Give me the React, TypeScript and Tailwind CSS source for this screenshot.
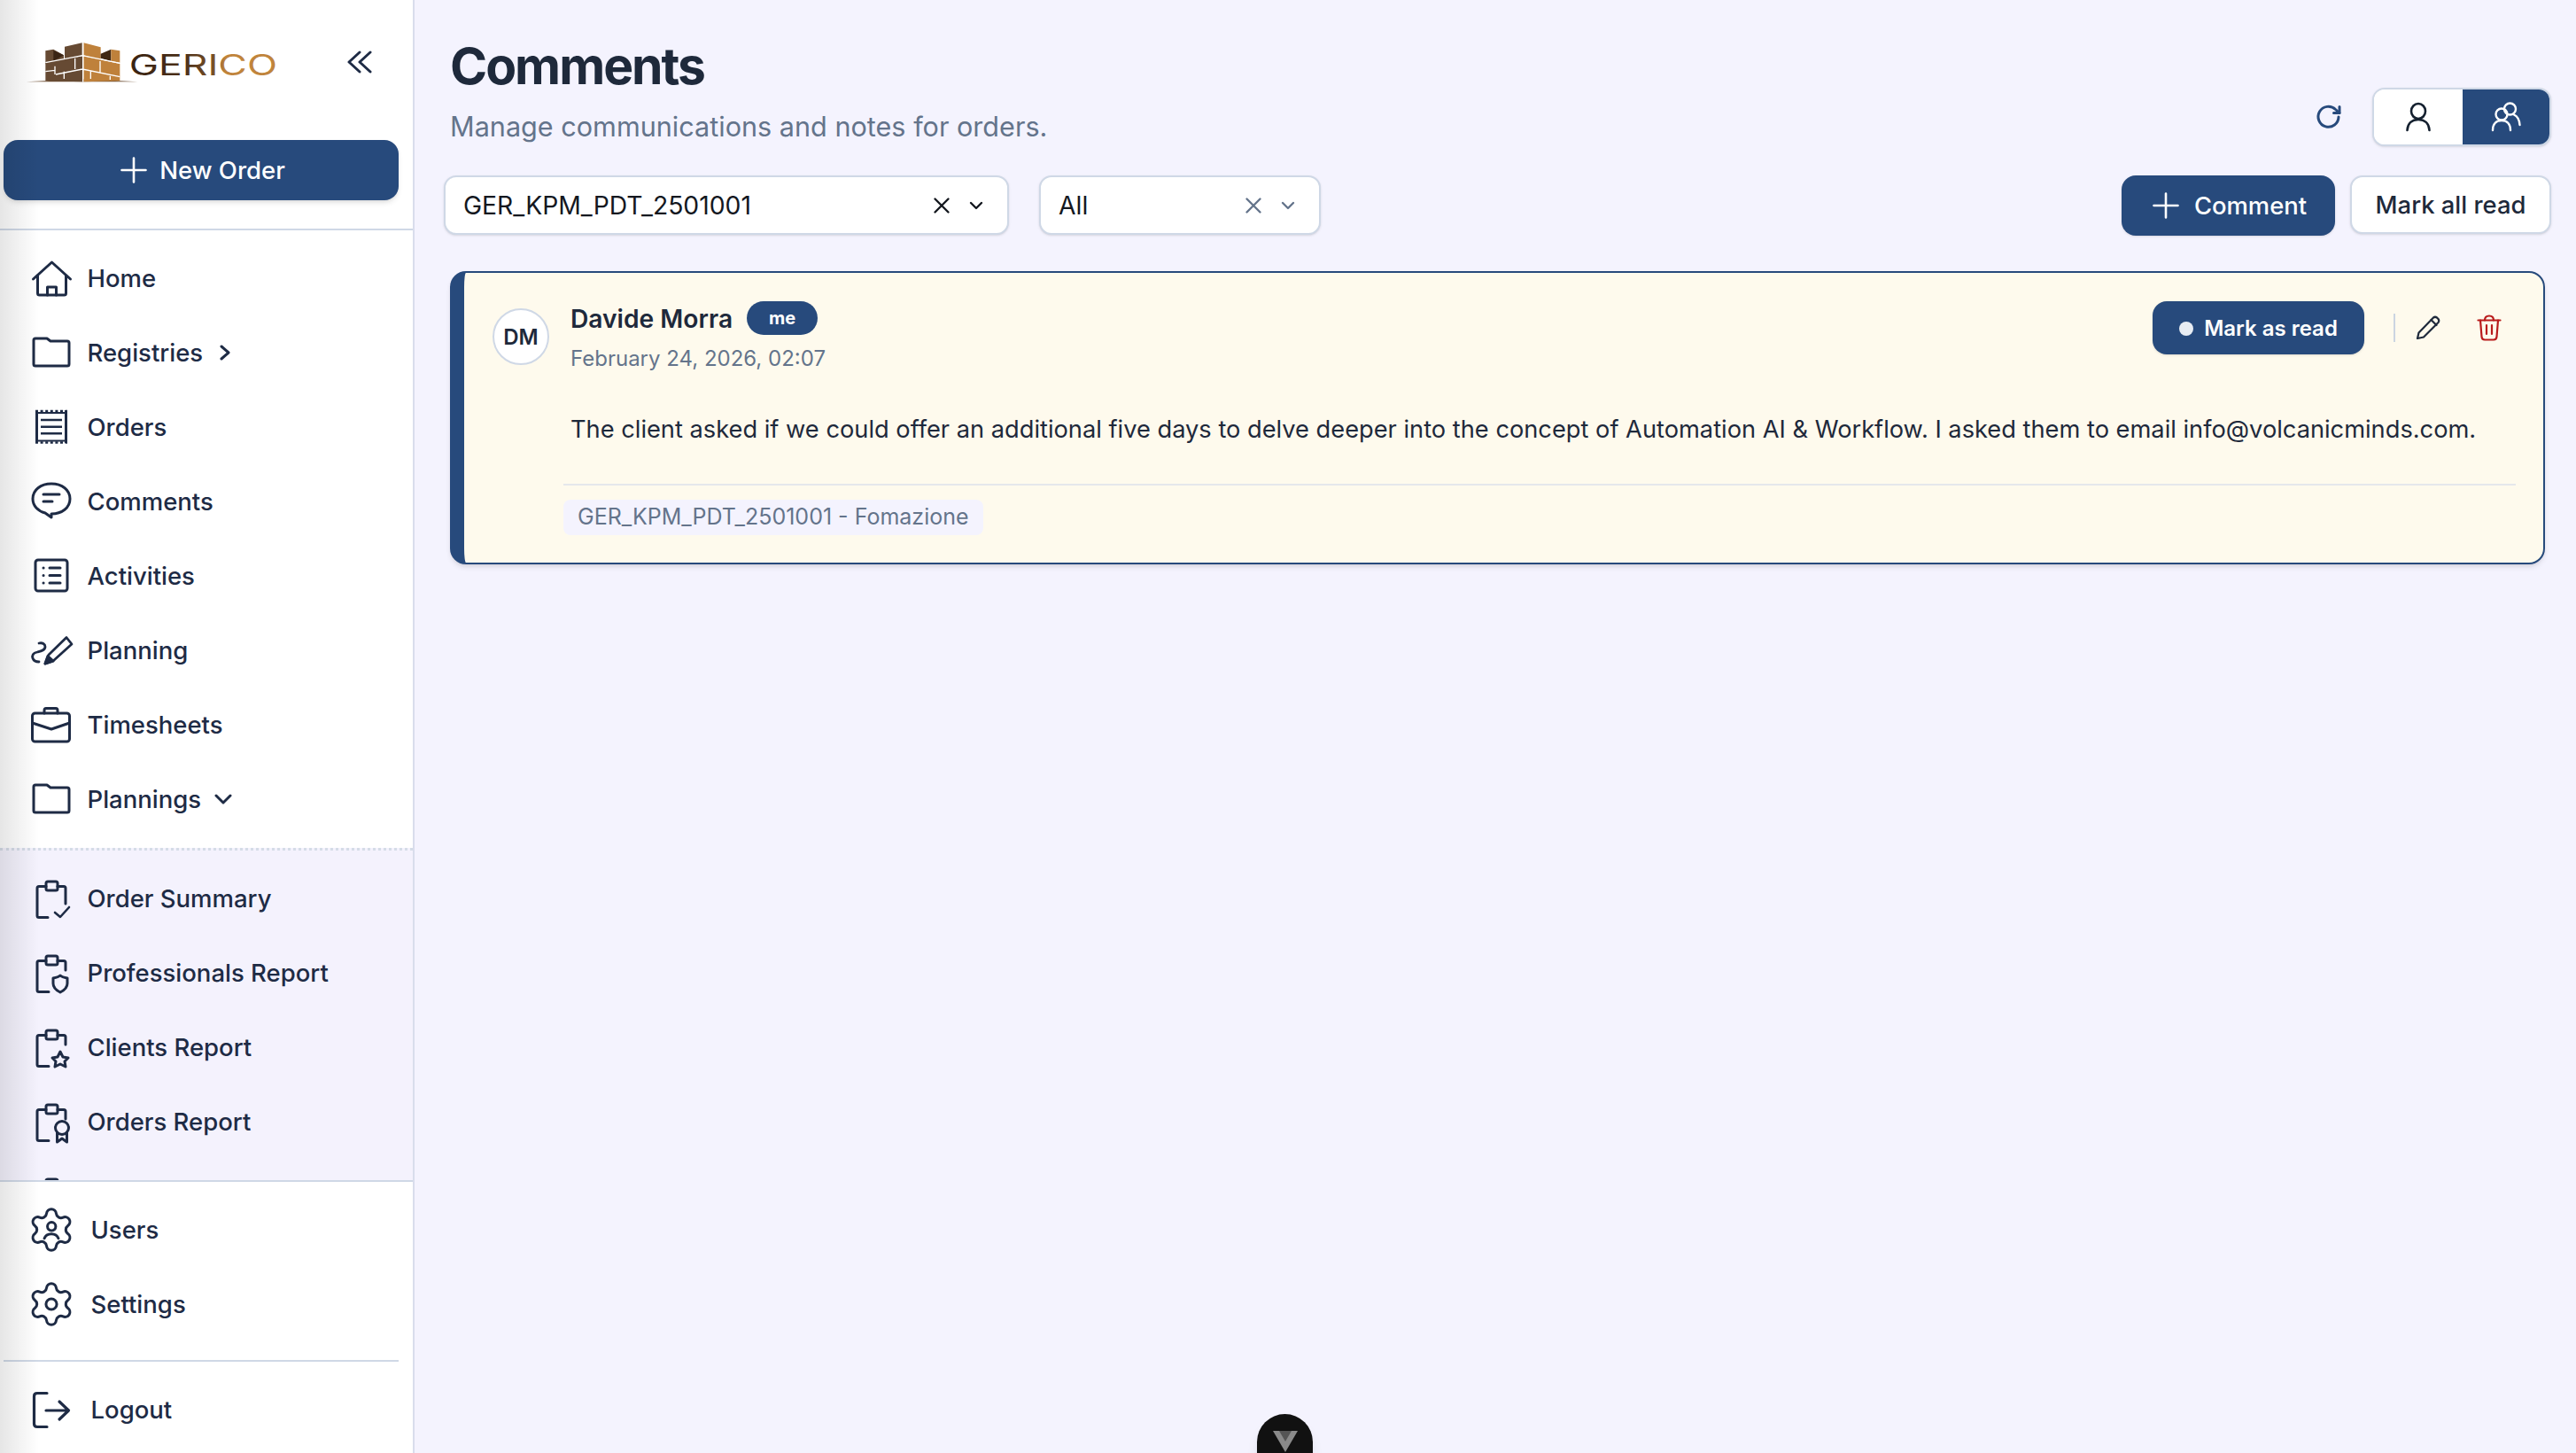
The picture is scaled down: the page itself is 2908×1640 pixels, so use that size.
import React from "react";

const INK = "#1e2b45";

function Box({ children }: { children: React.ReactNode }) {
  return (
    <svg width="56" height="56" viewBox="0 0 56 56" fill="none" stroke={INK} strokeWidth="3" strokeLinecap="round" strokeLinejoin="round" className="shrink-0">
      {children}
    </svg>
  );
}

const HomeIcon = () => (
  <Box>
    <path d="M7.5 29 L28.5 10 L49.5 29" />
    <path d="M12.5 25 V45 Q12.5 47 14.5 47 H42.5 Q44.5 47 44.5 45 V25" />
    <path d="M23.5 47 V38 H33.5 V47" />
  </Box>
);
const FolderIcon = () => (
  <Box>
    <path d="M8 14 Q8 12 10 12 H23 L27 15 H46 Q48 15 48 17 V41 Q48 43 46 43 H10 Q8 43 8 41 Z" />
  </Box>
);
const ReceiptIcon = () => (
  <Box>
    <path d="M11.5 9 V46 M44.5 9 V46" strokeLinecap="butt" />
    <path d="M10 10 H46 M10 45.5 H46" strokeDasharray="3 2.6" strokeWidth="2.6" strokeLinecap="butt" />
    <path d="M11 12 H45 M11 43.5 H45" strokeWidth="2.2" strokeLinecap="butt" />
    <path d="M16 20 H40 M16 27.7 H40 M16 35.3 H40" strokeWidth="2.6" strokeLinecap="butt" />
  </Box>
);
const CommentIcon = () => (
  <Box>
    <path d="M28 8 C16 8 7 15 7 25 C7 33 13 39 21 41 L28 46 V42 C40 42 49 35 49 25 C49 15 40 8 28 8 Z" />
    <path d="M19 20 H37 M19 28 H29" />
  </Box>
);
const ActivitiesIcon = () => (
  <Box>
    <rect x="10" y="10" width="36" height="35" rx="3" />
    <path d="M19 19 H19.1 M19 27.5 H19.1 M19 36 H19.1" />
    <path d="M26 19 H38 M26 27.5 H38 M26 36 H38" />
  </Box>
);
const PlanningIcon = () => (
  <Box>
    <path d="M21 43 L25 33 L45 13.5 L51 21 L30 40 Z" strokeWidth="2.8" />
    <path d="M21 43 L24 34.5 L30 40 Z" fill={INK} />
    <path d="M14 20 C18 19 21 21 21 24 C21 28 16 29 12 30 C7 31 6 34 7 37 C8 40 11 41 14 41" strokeWidth="2.8" />
  </Box>
);
const BriefcaseIcon = () => (
  <Box>
    <rect x="6.5" y="15" width="42" height="32" rx="3" />
    <path d="M20 15 V12 Q20 9.5 22 9.5 H33 Q35 9.5 35 12 V15" />
    <path d="M6.5 26 L28 33 L48.5 26" />
  </Box>
);

function Clip({ children, rightTo = 25, bottomTo = 25 }: { children?: React.ReactNode; rightTo?: number; bottomTo?: number }) {
  return (
    <Box>
      <rect x="22" y="9" width="13" height="10" rx="2" />
      <path d={`M22 14.5 H14 Q12 14.5 12 16.5 V47.5 Q12 49.5 14 49.5 H${bottomTo}`} />
      <path d={`M35 14.5 H42 Q44 14.5 44 16.5 V${rightTo}`} />
      {children}
    </Box>
  );
}
const ClipCheck = () => (
  <Clip rightTo={34} bottomTo={24}>
    <path d="M32 44 L38 49 L48 38" strokeWidth="2.6" />
  </Clip>
);
const ClipShield = () => (
  <Clip>
    <path d="M30 34 Q36 33 38 31 Q40 33 46 34 V40 Q46 46 38 50 Q30 46 30 40 Z" />
  </Clip>
);
const ClipStar = () => (
  <Clip bottomTo={25}>
    <path d="M38 33 L41 39 L47 40 L43 44 L44 50 L38 47 L32 50 L33 44 L29 40 L35 39 Z" />
  </Clip>
);
const ClipRibbon = () => (
  <Clip>
    <circle cx="40" cy="35" r="7.5" />
    <path d="M34.5 40 V51 L40 47 L45.5 51 V40" />
  </Clip>
);

const GEAR =
  "M9.671 4.136a2.34 2.34 0 0 1 4.659 0 2.34 2.34 0 0 0 3.319 1.915 2.34 2.34 0 0 1 2.33 4.033 2.34 2.34 0 0 0 0 3.831 2.34 2.34 0 0 1-2.33 4.033 2.34 2.34 0 0 0-3.319 1.915 2.34 2.34 0 0 1-4.659 0 2.34 2.34 0 0 0-3.32-1.915 2.34 2.34 0 0 1-2.33-4.033 2.34 2.34 0 0 0 0-3.831A2.34 2.34 0 0 1 6.35 6.051a2.34 2.34 0 0 0 3.319-1.915";

const GearIcon = ({ users }: { users?: boolean }) => (
  <svg width="56" height="56" viewBox="0 0 24 24" fill="none" stroke={INK} strokeWidth="1.3" strokeLinecap="round" strokeLinejoin="round" className="shrink-0">
    <path d={GEAR} />
    {users ? (
      <>
        <circle cx="12.1" cy="10.4" r="2" />
        <path d="M8.6 16.2 C9.2 14.5 10.5 14 12 14 C13.5 14 14.8 14.5 15.4 16.2" />
      </>
    ) : (
      <circle cx="12" cy="12" r="2.6" />
    )}
  </svg>
);

const LogoutIcon = () => (
  <Box>
    <path d="M23 9.5 H12 Q8.5 9.5 8.5 13 V44 Q8.5 47.5 12 47.5 H23" strokeWidth="3.2" />
    <path d="M22 29 H47 M37 19 L47.5 29 L37 39" strokeWidth="3.2" />
  </Box>
);

function NavItem({ icon, label, after, gap = "gap-[12.5px]" }: { icon: React.ReactNode; label: string; after?: React.ReactNode; gap?: string }) {
  return (
    <div className={`flex h-[84px] shrink-0 items-center pl-[30px] ${gap} text-[27.5px] font-medium text-[#1e2b45]`}>
      {icon}
      <span className="pt-[1px]">{label}</span>
      {after}
    </div>
  );
}

const Plus = ({ size = 30 }: { size?: number }) => (
  <svg width={size} height={size} viewBox="0 0 30 30" fill="none" stroke="#fff" strokeWidth="2.6" strokeLinecap="round" className="shrink-0">
    <path d="M15 1.5 V28.5 M1.5 15 H28.5" />
  </svg>
);

function Logo() {
  return (
    <svg width="290" height="60" viewBox="80 130 870 180" fill="none" className="shrink-0">
      <defs>
        <linearGradient id="gericoText" x1="440" x2="935" y1="0" y2="0" gradientUnits="userSpaceOnUse">
          <stop offset="0" stopColor="#3a2312" />
          <stop offset="0.36" stopColor="#4a2e17" />
          <stop offset="0.58" stopColor="#7a5229" />
          <stop offset="0.65" stopColor="#c0843c" />
          <stop offset="1" stopColor="#c0843c" />
        </linearGradient>
      </defs>
      <polygon points="88,275 280,266 465,275" fill="#6b4c30" />
      <polygon points="153,170 180,165 215,185 215,205 153,215" fill="#664a33" />
      <polygon points="180,168 215,185 180,205" fill="#3a2414" />
      <polygon points="218,156 277,143 277,185 218,205" fill="#664a33" />
      <polygon points="282,143 340,158 340,203 282,185" fill="#bf813b" />
      <polygon points="340,180 375,165 375,205 340,195" fill="#3f2713" />
      <polygon points="375,165 405,170 405,210 375,205" fill="#bf813b" />
      <polygon points="153,211 278,188 278,275 153,272" fill="#664a33" />
      <polygon points="282,188 405,214 405,272 282,275" fill="#bf813b" />
      <path d="M153 210 L278 186 L405 212 M153 240 L185 236 M185 222 V250 M253 195 V232 M188 250 L278 232 L405 258 M338 205 V245 M280 143 V275 M216 240 V265 M306 240 V265 M372 255 V268" stroke="#fff" strokeWidth="4" />
      <text x="436" y="254" fontFamily="Inter, sans-serif" fontSize="96" fontWeight="400" fill="url(#gericoText)" textLength="502" lengthAdjust="spacingAndGlyphs">
        GERICO
      </text>
    </svg>
  );
}

function Sidebar() {
  return (
    <aside className="relative flex h-[1640px] w-[468px] shrink-0 flex-col border-r-2 border-[#d9ddec] bg-white">
      <div className="flex h-[158px] shrink-0 items-start justify-between pl-[27px] pr-[45px] pt-[44px]">
        <Logo />
        <svg width="30" height="26" viewBox="0 0 30 26" fill="none" stroke={INK} strokeWidth="3" strokeLinecap="round" strokeLinejoin="round" className="mt-[13px] shrink-0">
          <path d="M15 2 L3 13 L15 24 M27 2 L15 13 L27 24" />
        </svg>
      </div>
      <div className="shrink-0 border-b-2 border-[#cfd8e6] px-[4px] pb-[32px]">
        <div className="flex h-[68px] w-[446px] items-center justify-center gap-[14px] rounded-[16px] bg-[#274a7c] pl-[4px] text-[27.5px] font-medium text-white shadow-md">
          <Plus />
          <span className="pt-[1px]">New Order</span>
        </div>
      </div>
      <nav className="shrink-0 pb-[13px] pt-[12px]">
        <NavItem icon={<HomeIcon />} label="Home" />
        <NavItem
          icon={<FolderIcon />}
          label="Registries"
          after={
            <svg width="14" height="20" viewBox="0 0 14 20" fill="none" stroke={INK} strokeWidth="3" strokeLinecap="round" strokeLinejoin="round" className="ml-[5px]">
              <path d="M3 3 L11 10 L3 17" />
            </svg>
          }
        />
        <NavItem icon={<ReceiptIcon />} label="Orders" />
        <NavItem icon={<CommentIcon />} label="Comments" />
        <NavItem icon={<ActivitiesIcon />} label="Activities" />
        <NavItem icon={<PlanningIcon />} label="Planning" />
        <NavItem icon={<BriefcaseIcon />} label="Timesheets" />
        <NavItem
          icon={<FolderIcon />}
          label="Plannings"
          after={
            <svg width="22" height="14" viewBox="0 0 22 14" fill="none" stroke={INK} strokeWidth="3" strokeLinecap="round" strokeLinejoin="round" className="ml-[1px]">
              <path d="M3 3 L11 11 L19 3" />
            </svg>
          }
        />
      </nav>
      <div className="min-h-0 flex-1 overflow-hidden border-t-[3px] border-dotted border-[#d5dce7] bg-[#f4f2fd] pt-[12px]">
        <NavItem icon={<ClipCheck />} label="Order Summary" />
        <NavItem icon={<ClipShield />} label="Professionals Report" />
        <NavItem icon={<ClipStar />} label="Clients Report" />
        <NavItem icon={<ClipRibbon />} label="Orders Report" />
        <NavItem icon={<Clip />} label="" />
      </div>
      <div className="shrink-0 border-t-2 border-[#cfd8e6] pb-[7px] pt-[12px]">
        <NavItem icon={<GearIcon users />} label="Users" gap="gap-[16.5px]" />
        <NavItem icon={<GearIcon />} label="Settings" gap="gap-[16.5px]" />
        <div className="mx-[4px] mb-[12px] mt-[21px] h-[2px] w-[446px] bg-[#cfd8e6]" />
        <NavItem icon={<LogoutIcon />} label="Logout" gap="gap-[16.5px]" />
      </div>
      <div className="pointer-events-none absolute inset-y-0 left-0 w-[44px] bg-gradient-to-r from-black/10 to-transparent" />
    </aside>
  );
}

function XIcon({ color }: { color: string }) {
  return (
    <svg width="20" height="20" viewBox="0 0 20 20" fill="none" stroke={color} strokeWidth="2.4" strokeLinecap="round" className="shrink-0">
      <path d="M2.5 2.5 L17.5 17.5 M17.5 2.5 L2.5 17.5" />
    </svg>
  );
}
function Caret({ color }: { color: string }) {
  return (
    <svg width="16" height="10" viewBox="0 0 16 10" fill="none" stroke={color} strokeWidth="2.4" strokeLinecap="round" strokeLinejoin="round" className="shrink-0">
      <path d="M2 2 L8 8 L14 2" />
    </svg>
  );
}

function Select({ label, width, color }: { label: string; width: string; color: string }) {
  return (
    <div className={`flex h-[67px] ${width} items-center justify-between rounded-[14px] border-2 border-[#cfd8e6] bg-white pl-[20px] pr-[27px] text-[28.3px] text-[#14181f] shadow-sm`}>
      <span className="pt-[2px]">{label}</span>
      <span className="flex items-center gap-[21px]">
        <XIcon color={color} />
        <Caret color={color} />
      </span>
    </div>
  );
}

function Main() {
  return (
    <main className="relative h-[1640px] min-w-0 flex-1 overflow-hidden bg-[#f4f3fe] pl-[33px] pr-[28px] pt-[37px]">
      <div className="flex items-end justify-between">
        <div className="pl-[7px]">
          <h1 className="text-[57px] font-bold leading-[76px] tracking-[-2px] text-[#1e293b]">Comments</h1>
          <p className="mt-[8px] text-[30.6px] leading-[44px] text-[#64748b]">Manage communications and notes for orders.</p>
        </div>
        <div className="flex items-center gap-[34px]">
          <svg width="30" height="30" viewBox="0 0 30 30" fill="none" stroke="#274a7c" strokeWidth="3" strokeLinecap="round" strokeLinejoin="round">
            <path d="M26 15 A11.5 11.5 0 1 1 22.5 6.5 L27 10.5" />
            <path d="M27 3.5 V10.5 H20.5" />
          </svg>
          <div className="flex h-[66px] w-[202px] overflow-hidden rounded-[14px] border-2 border-[#cfd8e6] bg-white shadow-sm">
            <div className="flex w-[100px] items-center justify-center bg-white">
              <svg width="30" height="34" viewBox="0 0 30 34" fill="none" stroke="#14202f" strokeWidth="2.6" strokeLinecap="round">
                <ellipse cx="15" cy="10.5" rx="8" ry="8.5" />
                <path d="M2.5 32 C3 24 8 20 15 20 C22 20 27 24 27.5 32" />
              </svg>
            </div>
            <div className="flex flex-1 items-center justify-center bg-[#274a7c]">
              <svg width="34" height="34" viewBox="0 0 34 34" fill="none" stroke="#fff" strokeWidth="2.4" strokeLinecap="round">
                <circle cx="21.5" cy="8" r="6.5" />
                <circle cx="12" cy="14" r="6.5" />
                <path d="M2 32 C2 25 6 21 12 21 C18 21 22 25 22 32" />
                <path d="M26 14.5 C29.5 16 32 19 32.5 26" />
              </svg>
            </div>
          </div>
        </div>
      </div>

      <div className="mt-[33px] flex items-start justify-between">
        <div className="flex gap-[34px]">
          <Select label="GER_KPM_PDT_2501001" width="w-[638px]" color="#14181f" />
          <Select label="All" width="w-[318px]" color="#64748b" />
        </div>
        <div className="flex gap-[17px]">
          <div className="flex h-[68px] w-[241px] items-center justify-center gap-[17px] rounded-[16px] bg-[#274a7c] pl-[3px] text-[27.4px] font-medium text-white shadow-sm">
            <Plus />
            <span className="pt-[2px]">Comment</span>
          </div>
          <div className="flex h-[66px] w-[227px] items-center justify-center rounded-[14px] border-2 border-[#cfd8e6] bg-white pt-[2px] text-[27.4px] font-medium text-[#1e293b] shadow-sm">
            Mark all read
          </div>
        </div>
      </div>

      <article className="mr-[7px] mt-[40px] ml-[7px] rounded-[18px] border-2 border-l-[16px] border-[#274a7c] bg-[#fefaed] pb-[31px] pl-[32px] pr-[31px] pt-[32px] shadow-md">
        <div className="flex items-start justify-between">
          <div className="flex items-start gap-[24px]">
            <div className="mt-[8px] flex h-[64px] w-[64px] items-center justify-center rounded-full border-2 border-[#cfd8e6] bg-white pt-[1px] text-[24px] font-semibold text-[#1e293b]">DM</div>
            <div>
              <div className="flex h-[38px] items-center gap-[16px]">
                <span className="pt-[3px] text-[28.2px] font-semibold text-[#1e293b]">Davide Morra</span>
                <span className="flex h-[38px] w-[80px] items-center justify-center rounded-full bg-[#274a7c] text-[20px] font-bold text-white">me</span>
              </div>
              <div className="mt-[9px] text-[24px] leading-[36px] text-[#64748b]">February 24, 2026, 02:07</div>
            </div>
          </div>
          <div className="mr-[16px] flex items-center">
            <div className="flex h-[60px] w-[239px] items-center justify-center gap-[12px] rounded-[16px] bg-[#274a7c] pt-[1px] text-[24px] font-semibold text-white shadow-sm">
              <span className="h-[16px] w-[16px] rounded-full bg-[#e8edf3]" />
              Mark as read
            </div>
            <div className="ml-[33px] h-[32px] w-[2px] bg-[#cbd5e1]" />
            <svg width="28" height="28" viewBox="0 0 28 28" fill="none" stroke="#1e293b" strokeWidth="2.2" strokeLinecap="round" strokeLinejoin="round" className="ml-[23px]">
              <path d="M2 26 L3.5 19.5 L20 2.5 Q22 1 24 2.5 L25.5 4 Q27 6 25.5 8 L9 24.5 Z" />
              <path d="M17.5 5 L23.5 11" />
            </svg>
            <svg width="28" height="30" viewBox="0 0 28 30" fill="none" stroke="#b91c1c" strokeWidth="2.2" strokeLinecap="round" strokeLinejoin="round" className="ml-[41px]">
              <path d="M1.5 6.5 H26.5" />
              <path d="M9 6.5 C9 3 11 1.5 14 1.5 C17 1.5 19 3 19 6.5" />
              <path d="M4 6.5 L5.5 25 Q5.8 28.5 9 28.5 H19 Q22.2 28.5 22.5 25 L24 6.5" />
              <path d="M11 12 V22 M17 12 V22" />
            </svg>
          </div>
        </div>
        <p className="ml-[88px] mt-[41px] whitespace-nowrap text-[27.24px] leading-[42px] text-[#1e293b]">
          The client asked if we could offer an additional five days to delve deeper into the concept of Automation AI &amp; Workflow. I asked them to email info@volcanicminds.com.
        </p>
        <div className="ml-[80px] mt-[40px] border-t-2 border-[#e5e7eb] pt-[16px]">
          <span className="inline-flex h-[40px] items-center rounded-[8px] bg-[#f4f3fe] px-[16px] text-[25px] text-[#64748b]">GER_KPM_PDT_2501001 - Fomazione</span>
        </div>
      </article>
      <div className="absolute left-[951px] top-[1596px] flex h-[80px] w-[63px] justify-center rounded-full bg-[#111111] pt-[19px] shadow-lg">
        <svg width="28" height="24" viewBox="0 0 28 24" className="shrink-0">
          <polygon points="0,0 28,0 14,24" fill="#8a8a8a" />
          <polygon points="7,0 21,0 14,12" fill="#555555" />
        </svg>
      </div>
    </main>
  );
}

export default function App() {
  return (
    <div className="flex h-[1640px] w-[2908px] overflow-hidden font-['Inter',sans-serif]">
      <Sidebar />
      <Main />
    </div>
  );
}
